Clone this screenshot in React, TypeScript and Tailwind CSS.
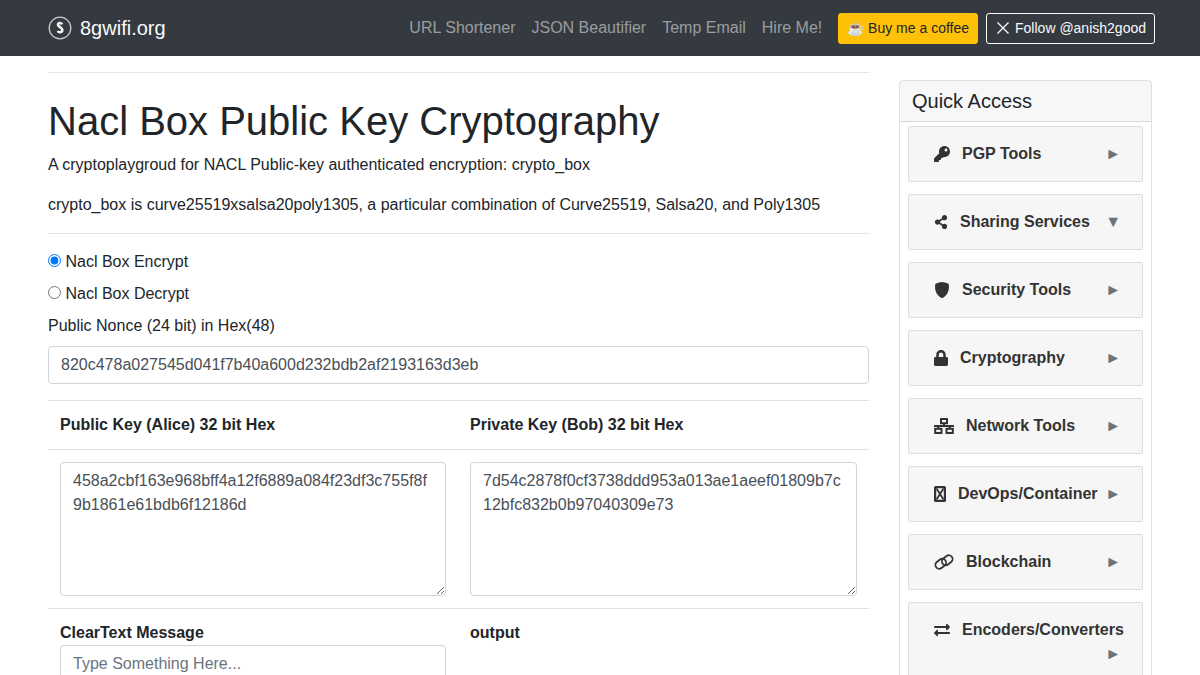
import { FaKey, FaLock, FaExchangeAlt, FaShareAlt } from "react-icons/fa";
import { BsShieldFill } from "react-icons/bs";

function NetIcon() {
  return (
    <svg viewBox="0 0 20 16" className="w-[20px] h-[16px]" fill="none" stroke="currentColor" strokeWidth="2">
      <rect x="7" y="1" width="6" height="4.2" />
      <rect x="1.2" y="10.800" width="6.300" height="4.200" />
      <rect x="12.500" y="10.800" width="6.300" height="4.200" />
      <path d="M10 5v3M0 8h20M4.300 8v3M15.700 8v3" />
    </svg>
  );
}
function BoxIcon() {
  return (
    <svg viewBox="0 0 12 16" className="w-[12px] h-[16px]" fill="none" stroke="currentColor">
      <rect x="1.100" y="1.100" width="9.800" height="13.800" strokeWidth="2.200" rx="0.500" />
      <path d="M2.500 2.500 9.500 13.500M9.500 2.500 2.500 13.500" strokeWidth="1.800" />
    </svg>
  );
}
function LinkIcon() {
  return (
    <svg viewBox="0 0 20 16" className="w-[20px] h-[16px]" fill="none" stroke="currentColor" strokeWidth="1.800">
      <rect x="1" y="6" width="11.500" height="7.500" rx="3.750" transform="rotate(-38 6.750 9.750)" />
      <rect x="7.500" y="2.500" width="11.500" height="7.500" rx="3.750" transform="rotate(-38 13.250 6.250)" />
    </svg>
  );
}
function XIcon() {
  return (
    <svg viewBox="0 0 16 16" className="w-[16px] h-[16px] mr-[4px]" fill="none" stroke="currentColor" strokeWidth="1.300">
      <path d="M2.500 2.500 13.500 13.500M13.500 2.500 2.500 13.500" />
    </svg>
  );
}
function Logo() {
  return (
    <svg viewBox="0 0 24 24" className="w-[24px] h-[24px]">
      <circle cx="12" cy="12" r="10.800" fill="none" stroke="#c9cacc" strokeWidth="1.300" />
      <path d="M14.200 8.400c-.6-1.800-4-2.200-4.300 0-.3 2.200 4.500 3.200 4.500 5.600 0 2.600-3.800 2.800-4.700 1" fill="none" stroke="#f4f4f5" strokeWidth="2.500" />
    </svg>
  );
}

const items = [
  { label: "PGP Tools", icon: <FaKey className="w-4 h-4" />, arrow: "►" },
  { label: "Sharing Services", icon: <FaShareAlt className="w-[14px] h-[14px]" />, arrow: "▼" },
  { label: "Security Tools", icon: <BsShieldFill className="w-4 h-4" />, arrow: "►" },
  { label: "Cryptography", icon: <FaLock className="w-[14px] h-[16px]" />, arrow: "►" },
  { label: "Network Tools", icon: <NetIcon />, arrow: "►" },
  { label: "DevOps/Container", icon: <BoxIcon />, arrow: "►" },
  { label: "Blockchain", icon: <LinkIcon />, arrow: "►" },
  { label: "Encoders/Converters", icon: <FaExchangeAlt className="w-4 h-4" />, arrow: "►" },
];

export default function App() {
  return (
    <div className="h-screen overflow-hidden bg-white text-[16px] leading-[24px] text-[#212529] font-['Liberation_Sans',Arial,sans-serif]">
      <nav className="h-[56px] bg-[#343a40] flex items-center pl-[48px] pr-[45px]">
        <a className="flex items-center gap-[8px] text-[20px] text-[#f8f9fa]">
          <Logo />
          <span>8gwifi.org</span>
        </a>
        <div className="ml-auto flex items-center">
          {["URL Shortener", "JSON Beautifier", "Temp Email", "Hire Me!"].map((t) => (
            <a key={t} className="px-[8px] text-[rgba(255,255,255,0.5)]">{t}</a>
          ))}
          <a className="ml-[8px] h-[31px] px-[8px] flex items-center rounded-[3px] border border-[#ffc107] bg-[#ffc107] text-[#212529] text-[14px] whitespace-nowrap">☕ Buy me a coffee</a>
          <a className="ml-[8px] h-[31px] px-[8px] flex items-center rounded-[3px] border border-[#f8f9fa] text-[#f8f9fa] text-[14px] whitespace-nowrap"><XIcon />Follow @anish2good</a>
        </div>
      </nav>

      <div className="flex gap-[30px] px-[48px]">
        <main className="w-[821px] shrink-0 pt-[16px]">
          <hr className="border-[#e5e5e5]" />
          <h1 className="mt-[24px] mb-[8px] text-[40px] leading-[48px] font-normal">Nacl Box Public Key Cryptography</h1>
          <p className="mb-[16px]">A cryptoplaygroud for NACL Public-key authenticated encryption: crypto_box</p>
          <p className="mb-[16px]">crypto_box is curve25519xsalsa20poly1305, a particular combination of Curve25519, Salsa20, and Poly1305</p>
          <hr className="border-[#e5e5e5] mb-[16px]" />
          <label className="block mb-[8px]"><input type="radio" name="m" defaultChecked className="mr-[4.450px] accent-[#0075ff]" />Nacl Box Encrypt</label>
          <label className="block mb-[8px]"><input type="radio" name="m" className="mr-[4.450px]" />Nacl Box Decrypt</label>
          <label className="block mb-[8px]">Public Nonce (24 bit) in Hex(48)</label>
          <input readOnly value="820c478a027545d041f7b40a600d232bdb2af2193163d3eb" className="block w-full h-[38px] px-[12px] mb-[16px] border border-[#ced4da] rounded-[4px] text-[#495057]" />
          <div className="grid grid-cols-[410px_411px] border-t border-[#dee2e6]">
            <div className="p-[12px] font-bold border-b border-[#dee2e6]">Public Key (Alice) 32 bit Hex</div>
            <div className="p-[12px] font-bold border-b border-[#dee2e6]">Private Key (Bob) 32 bit Hex</div>
            <div className="p-[12px] border-b border-[#dee2e6]">
              <textarea readOnly rows={5} value="458a2cbf163e968bff4a12f6889a084f23df3c755f8f9b1861e61bdb6f12186d" className="block w-full h-[134px] px-[12px] py-[6px] border border-[#ced4da] rounded-[4px] text-[#495057]" />
            </div>
            <div className="p-[12px] border-b border-[#dee2e6]">
              <textarea readOnly rows={5} value="7d54c2878f0cf3738ddd953a013ae1aeef01809b7c12bfc832b0b97040309e73" className="block w-full h-[134px] px-[12px] py-[6px] border border-[#ced4da] rounded-[4px] text-[#495057]" />
            </div>
            <div className="p-[12px]">
              <div className="font-bold">ClearText Message</div>
              <input placeholder="Type Something Here..." className="block w-full h-[38px] px-[12px] border border-[#ced4da] rounded-[4px] placeholder:text-[#6c757d]" />
            </div>
            <div className="p-[12px] font-bold">output</div>
          </div>
        </main>

        <aside className="w-[253px] shrink-0 pt-[24px]">
          <div className="border border-[rgba(0,0,0,0.125)] rounded-[4px]">
            <div className="h-[41px] px-[12px] flex items-center text-[20px] bg-[rgba(0,0,0,0.03)] border-b border-[rgba(0,0,0,0.125)]">Quick Access</div>
            <div className="px-[8px] pt-[4px] flex flex-col gap-[12px]">
              {items.map((it) => (
                <div key={it.label} className="min-h-[56px] pl-[25px] pr-[21px] py-[15px] flex flex-wrap items-start rounded-[2px] border border-[#ddd] bg-[#f6f6f6]">
                  <span className="flex items-center h-[24px] gap-[12px] font-bold text-[#333]">
                    <span className="flex items-center">{it.icon}</span>
                    <span>{it.label}</span>
                  </span>
                  <span className="ml-auto h-[24px] flex items-center text-[16px] text-[#6c757d]">{it.arrow}</span>
                </div>
              ))}
            </div>
          </div>
        </aside>
      </div>
    </div>
  );
}
